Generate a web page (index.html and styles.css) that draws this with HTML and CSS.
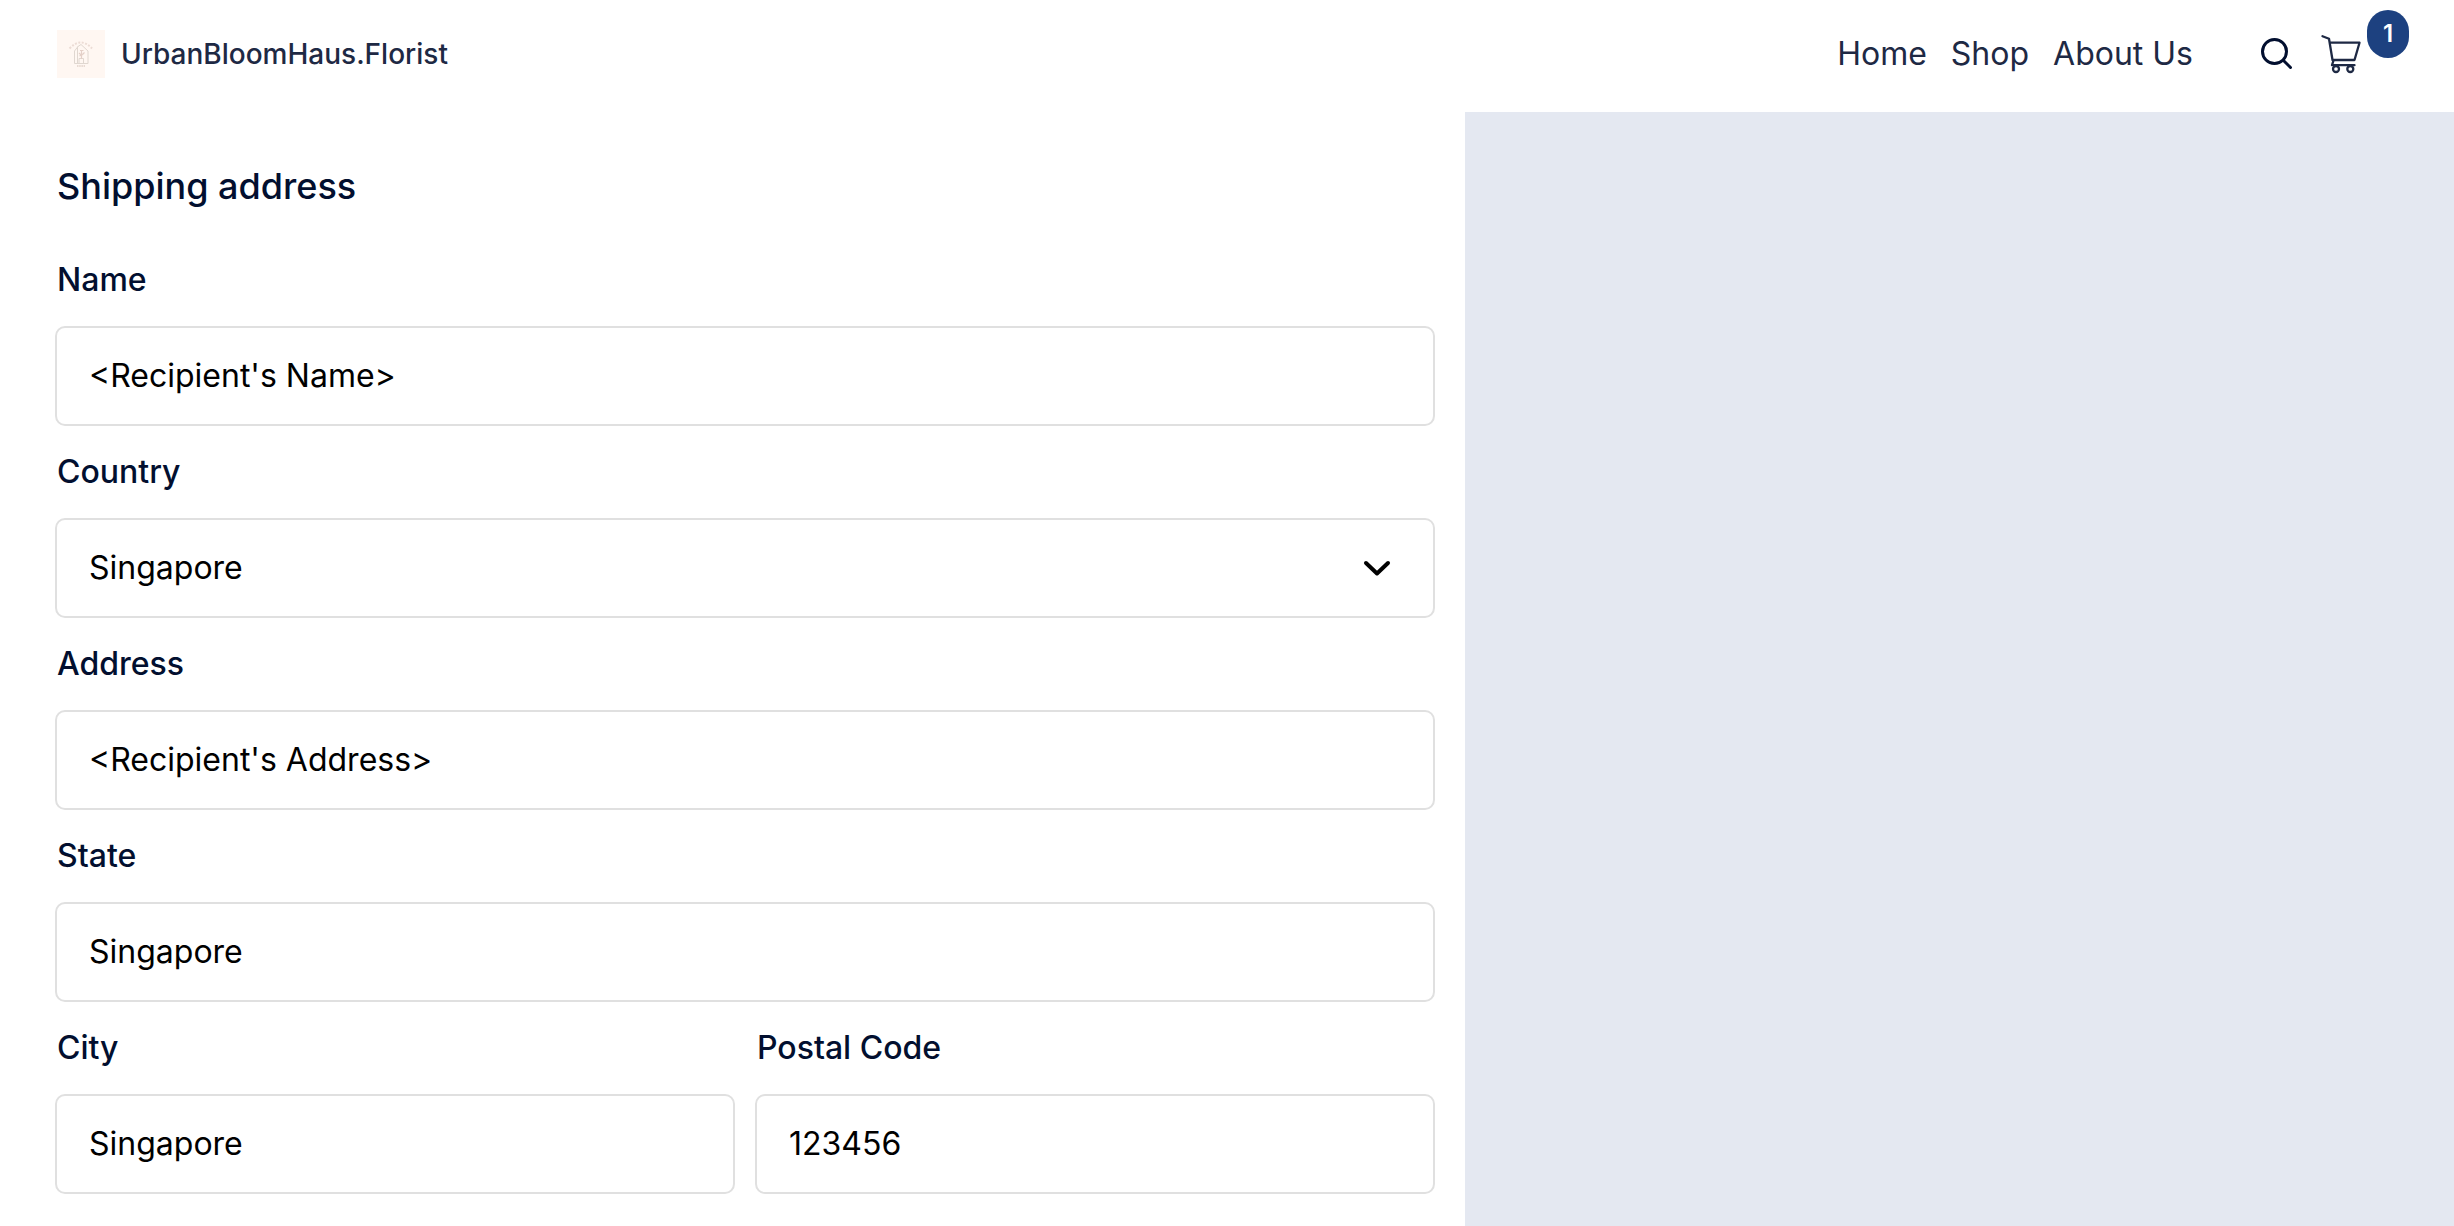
FILE: index.html
```html
<!DOCTYPE html>
<html lang="en">
<head>
  <meta charset="utf-8">
  <meta name="viewport" content="width=device-width, initial-scale=1">
  <title>UrbanBloomHaus.Florist</title>
  <link rel="stylesheet" href="styles.css">
</head>
<body>
  <header class="site-header">
    <a class="brand" href="#">
      <svg class="brand-logo" viewBox="0 0 48 48" aria-hidden="true">
        <rect width="48" height="48" fill="#fff7f2"/>
        <path d="M12.500 18.500Q24 6.500 35 18.500" fill="none" stroke="#ecdcd5" stroke-width="2" stroke-dasharray="2 1.500"/>
        <g fill="none" stroke="#e0d7d0" stroke-width="1">
          <path d="M17.500 33.500V21L21 16.500L24 14.500L31 21V33.500Z"/>
          <path d="M20.500 33V16.500M22 33V28.500H26.500V33"/>
        </g>
        <path d="M24.500 29V21M22 23L24.500 25.500L27.500 22.500M23 20.500H26.500M22.500 26L27 23.500" fill="none" stroke="#e4d0c8" stroke-width="1.200"/>
        <path d="M20 36H28" fill="none" stroke="#e8dad3" stroke-width="2" stroke-dasharray="1.500 .7"/>
      </svg>
      <span>UrbanBloomHaus.Florist</span>
    </a>
    <nav class="site-nav" aria-label="Main">
      <a href="#">Home</a>
      <a href="#">Shop</a>
      <a href="#">About Us</a>
    </nav>
    <div class="site-tools">
      <button class="tool" type="button" aria-label="Search">
        <svg width="32" height="32" viewBox="0 0 32 32" fill="none" stroke="#020f2f" stroke-width="3" stroke-linecap="round">
          <circle cx="13.500" cy="13.500" r="12"/>
          <path d="M22.500 22.500L29.500 29.500"/>
        </svg>
      </button>
      <a class="tool" href="#" aria-label="Cart, 1 item">
        <svg width="40" height="40" viewBox="0 0 40 40" fill="none" stroke="#1e2944" stroke-width="2.300" stroke-linecap="round" stroke-linejoin="round">
          <path d="M1.500 2.200L8 4.700L11.500 26H33.500L38.500 8.700L8.700 8.500"/>
          <path d="M12.500 26.500L11 31.200H33.500"/>
          <circle cx="15" cy="35" r="3"/>
          <circle cx="29.300" cy="35" r="3"/>
        </svg>
        <span class="badge">1</span>
      </a>
    </div>
  </header>

  <main class="checkout">
    <form class="shipping">
      <h1>Shipping address</h1>
      <div class="field">
        <label for="name">Name</label>
        <input id="name" type="text" value="&lt;Recipient's Name&gt;">
      </div>
      <div class="field">
        <label for="country">Country</label>
        <div class="select-box">
          <select id="country"><option>Singapore</option></select>
          <svg class="chevron" width="28" height="18" viewBox="0 0 28 18" fill="none" stroke="#000" stroke-width="4" stroke-linecap="round" stroke-linejoin="round" aria-hidden="true">
            <path d="M3 4L14 14.500L25 4"/>
          </svg>
        </div>
      </div>
      <div class="field">
        <label for="address">Address</label>
        <input id="address" type="text" value="&lt;Recipient's Address&gt;">
      </div>
      <div class="field">
        <label for="state">State</label>
        <input id="state" type="text" value="Singapore">
      </div>
      <div class="field-pair">
        <div class="field">
          <label for="city">City</label>
          <input id="city" type="text" value="Singapore">
        </div>
        <div class="field">
          <label for="postal">Postal Code</label>
          <input id="postal" type="text" value="123456">
        </div>
      </div>
    </form>
    <aside class="summary" aria-label="Order summary"></aside>
  </main>
</body>
</html>
```
FILE: styles.css
```css
* {
  box-sizing: border-box;
}

body {
  display: flex;
  flex-direction: column;
  min-height: 100vh;
  margin: 0;
  background: #fff;
  color: #020f2f;
  font-family: Inter, "Liberation Sans", sans-serif;
  font-size: 32px;
  line-height: 40px;
}

/* Header */
.site-header {
  display: flex;
  align-items: center;
  padding: 30px 93px 34px 57px;
  color: #1e2944;
}

.site-header a {
  color: inherit;
  text-decoration: none;
}

.brand {
  display: flex;
  align-items: center;
  gap: 16px;
  font-size: 28px;
  font-weight: 500;
}

.brand-logo {
  width: 48px;
  height: 48px;
}

.site-nav {
  display: flex;
  gap: 24px;
  margin-left: auto;
}

.site-tools {
  display: flex;
  align-items: center;
  gap: 28px;
  margin-left: 68px;
}

.tool {
  position: relative;
  display: flex;
  padding: 0;
  border: 0;
  background: none;
  cursor: pointer;
}

.badge {
  position: absolute;
  bottom: 16px;
  left: 46px;
  width: 42px;
  border-radius: 21px;
  background: #1d4180;
  color: #fff;
  font-size: 24px;
  font-weight: 600;
  line-height: 48px;
  text-align: center;
}

/* Checkout */
.checkout {
  display: grid;
  flex: 1;
  grid-template-columns: 1465fr 989fr;
}

.shipping {
  display: flex;
  flex-direction: column;
  gap: 26px;
  padding: 52px 30px 32px 55px;
}

h1 {
  margin: 0 0 26px;
  padding-left: 2px;
  font-size: 36px;
  font-weight: 500;
  line-height: 44px;
}

.field {
  display: flex;
  flex-direction: column;
  gap: 26px;
  min-width: 0;
}

.field-pair {
  display: grid;
  grid-template-columns: 1fr 1fr;
  gap: 20px;
}

label {
  padding-left: 2px;
  font-weight: 500;
}

input,
select {
  width: 100%;
  height: 100px;
  padding: 0 32px;
  border: 2px solid #e0e0e0;
  border-radius: 10px;
  background: #fff;
  color: #000;
  font: inherit;
  appearance: none;
}

input {
  padding-bottom: 2px;
}

.select-box {
  position: relative;
}

.select-box select {
  display: block;
}

.chevron {
  position: absolute;
  top: 41px;
  right: 44px;
  pointer-events: none;
}

.summary {
  background: #e4e8f1;
}
```
